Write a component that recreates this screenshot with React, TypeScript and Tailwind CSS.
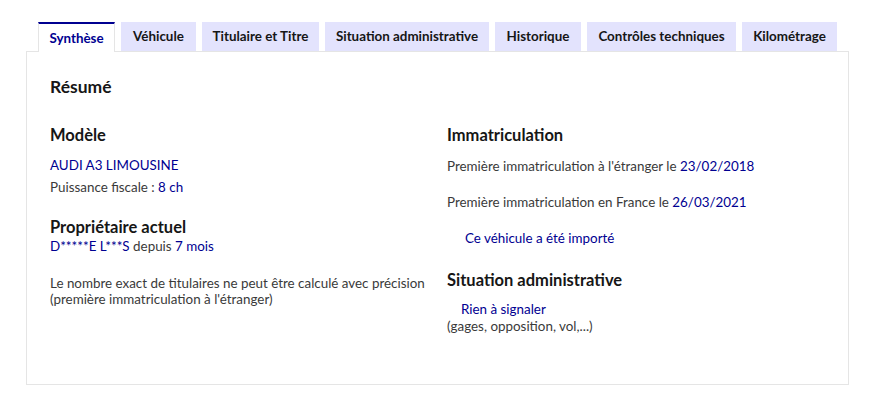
const tabs = [
  { label: 'Synthèse', w: 'w-[77px]' },
  { label: 'Véhicule', w: 'w-[75px]' },
  { label: 'Titulaire et Titre', w: 'w-[117px]' },
  { label: 'Situation administrative', w: 'w-[164px]' },
  { label: 'Historique', w: 'w-[86px]' },
  { label: 'Contrôles techniques', w: 'w-[149px]' },
  { label: 'Kilométrage', w: 'w-[95px]' },
];

export default function App() {
  return (
    <div className="min-h-[403px] w-[879px] bg-white pl-[26px] pt-[22px] font-['Lato','Noto_Sans',sans-serif] text-[13.4px] text-[#3a3a3a]">
      <div className="flex gap-[6px] pl-[12px]">
        {tabs.map((tab, i) => (
          <div
            key={tab.label}
            className={`${tab.w} flex items-center justify-center text-[13.4px] font-bold ${
              i === 0
                ? 'relative z-10 -mb-px h-[30px] border-x border-t-2 border-x-[#e5e5e5] border-t-[#000091] bg-white text-[#000091]'
                : 'h-[29px] bg-[#e3e3fd] text-[#161616]'
            }`}
          >
            {tab.label}
          </div>
        ))}
      </div>
      <div className="h-[334px] w-[823px] border border-[#e5e5e5] px-[23px] pt-[24px]">
        <h2 className="text-[17.5px] font-bold leading-[22px] text-[#161616]">Résumé</h2>
        <div className="mt-[26px] grid grid-cols-[397px_1fr]">
          <div>
            <h3 className="text-[16.5px] font-bold leading-[22px] text-[#161616]">Modèle</h3>
            <p className="mt-[8px] leading-[22px] text-[#000091]">AUDI A3 LIMOUSINE</p>
            <p className="leading-[22px]">
              Puissance fiscale : <span className="text-[#000091]">8 ch</span>
            </p>
            <h3 className="mt-[19px] text-[16.5px] font-bold leading-[20px] text-[#161616]">Propriétaire actuel</h3>
            <p className="leading-[18px]">
              <span className="text-[#000091]">D*****E L***S</span> depuis{' '}
              <span className="text-[#000091]">7 mois</span>
            </p>
            <p className="mt-[20px] leading-[16px]">
              Le nombre exact de titulaires ne peut être calculé avec précision
              <br />
              (première immatriculation à l'étranger)
            </p>
          </div>
          <div>
            <h3 className="text-[16.5px] font-bold leading-[22px] text-[#161616]">Immatriculation</h3>
            <p className="mt-[11px] leading-[18px]">
              Première immatriculation à l'étranger le <span className="text-[#000091]">23/02/2018</span>
            </p>
            <p className="mt-[18px] leading-[18px]">
              Première immatriculation en France le <span className="text-[#000091]">26/03/2021</span>
            </p>
            <p className="mt-[18px] pl-[18px] leading-[18px] text-[#000091]">Ce véhicule a été importé</p>
            <h3 className="mt-[22px] text-[16.5px] font-bold leading-[22px] text-[#161616]">
              Situation administrative
            </h3>
            <p className="mt-[10px] pl-[14px] leading-[17px] text-[#000091]">Rien à signaler</p>
            <p className="leading-[17px]">(gages, opposition, vol,...)</p>
          </div>
        </div>
      </div>
    </div>
  );
}
